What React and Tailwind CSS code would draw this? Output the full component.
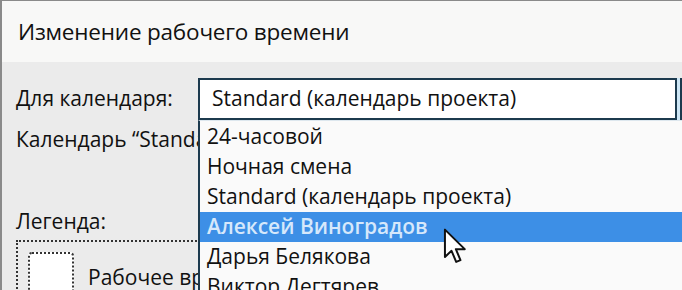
export default function App() {
  const items = [
    '24-часовой',
    'Ночная смена',
    'Standard (календарь проекта)',
    'Алексей Виноградов',
    'Дарья Белякова',
    'Виктор Дегтярев',
  ];

  return (
    <div
      className="relative w-[682px] h-[290px] overflow-hidden bg-[#ebebeb] border-l-2 border-t border-[#8a8a8a] text-[#111]"
      style={{ fontFamily: '"Open Sans", "Noto Sans", sans-serif' }}
    >
      {/* заголовок окна */}
      <div className="h-[61px] bg-[#f8f8f7] flex items-center pl-[16px] text-[22.5px] tracking-[-0.2px]">
        Изменение рабочего времени
      </div>

      <div className="pl-[14px] pt-[16px]">
        <div className="flex items-center h-[42px]">
          <div className="w-[182px] text-[21px]">Для календаря:</div>
          <div className="flex-1 h-[42px] bg-white border-2 border-[#1c3a4e] flex items-center pl-[12px] text-[21px]">
            Standard (календарь проекта)
          </div>
          <div className="w-[5px] h-[42px] bg-[#cde6f5] border-r-2 border-[#1c3a4e]" />
        </div>
        <div className="mt-[4px] text-[21px] whitespace-nowrap">Календарь “Standard” является базовым календарем</div>
        <div className="mt-[50px] text-[21px]">Легенда:</div>
        <div className="mt-[3px] h-[60px] w-[300px] border-2 border-dotted border-[#333] flex items-start pl-[10px] pt-[10px] gap-[14px]">
          <div className="w-[46px] h-[60px] bg-white border-2 border-dotted border-[#333] rounded-sm" />
          <div className="mt-[10px] text-[21px] whitespace-nowrap">Рабочее время</div>
        </div>
      </div>

      {/* раскрытый список */}
      <div className="absolute left-[196px] top-[119px] w-[484px] h-[175px] bg-[#fafafa] border-l-2 border-t border-[#1c3a4e] border-t-[#dde7ee] text-[21px] pt-[1px]">
        {items.map((item, i) =>
          i === 3 ? (
            <div key={item} className="h-[30px] flex items-center pl-[7px] bg-[#3d8fe6] text-[#d6e8fb] font-semibold">
              {item}
            </div>
          ) : (
            <div key={item} className="h-[30px] flex items-center pl-[7px]">
              {item}
            </div>
          )
        )}
      </div>

      {/* курсор */}
      <svg className="absolute left-[441px] top-[227px]" width="27" height="38" viewBox="0 0 16 23">
        <path d="M1 1 L1 17.5 L5 13.8 L7.8 20.5 L10.4 19.4 L7.6 12.8 L13 12.8 Z" fill="#fff" stroke="#111" strokeWidth="1.2" strokeLinejoin="round" />
      </svg>
    </div>
  );
}
